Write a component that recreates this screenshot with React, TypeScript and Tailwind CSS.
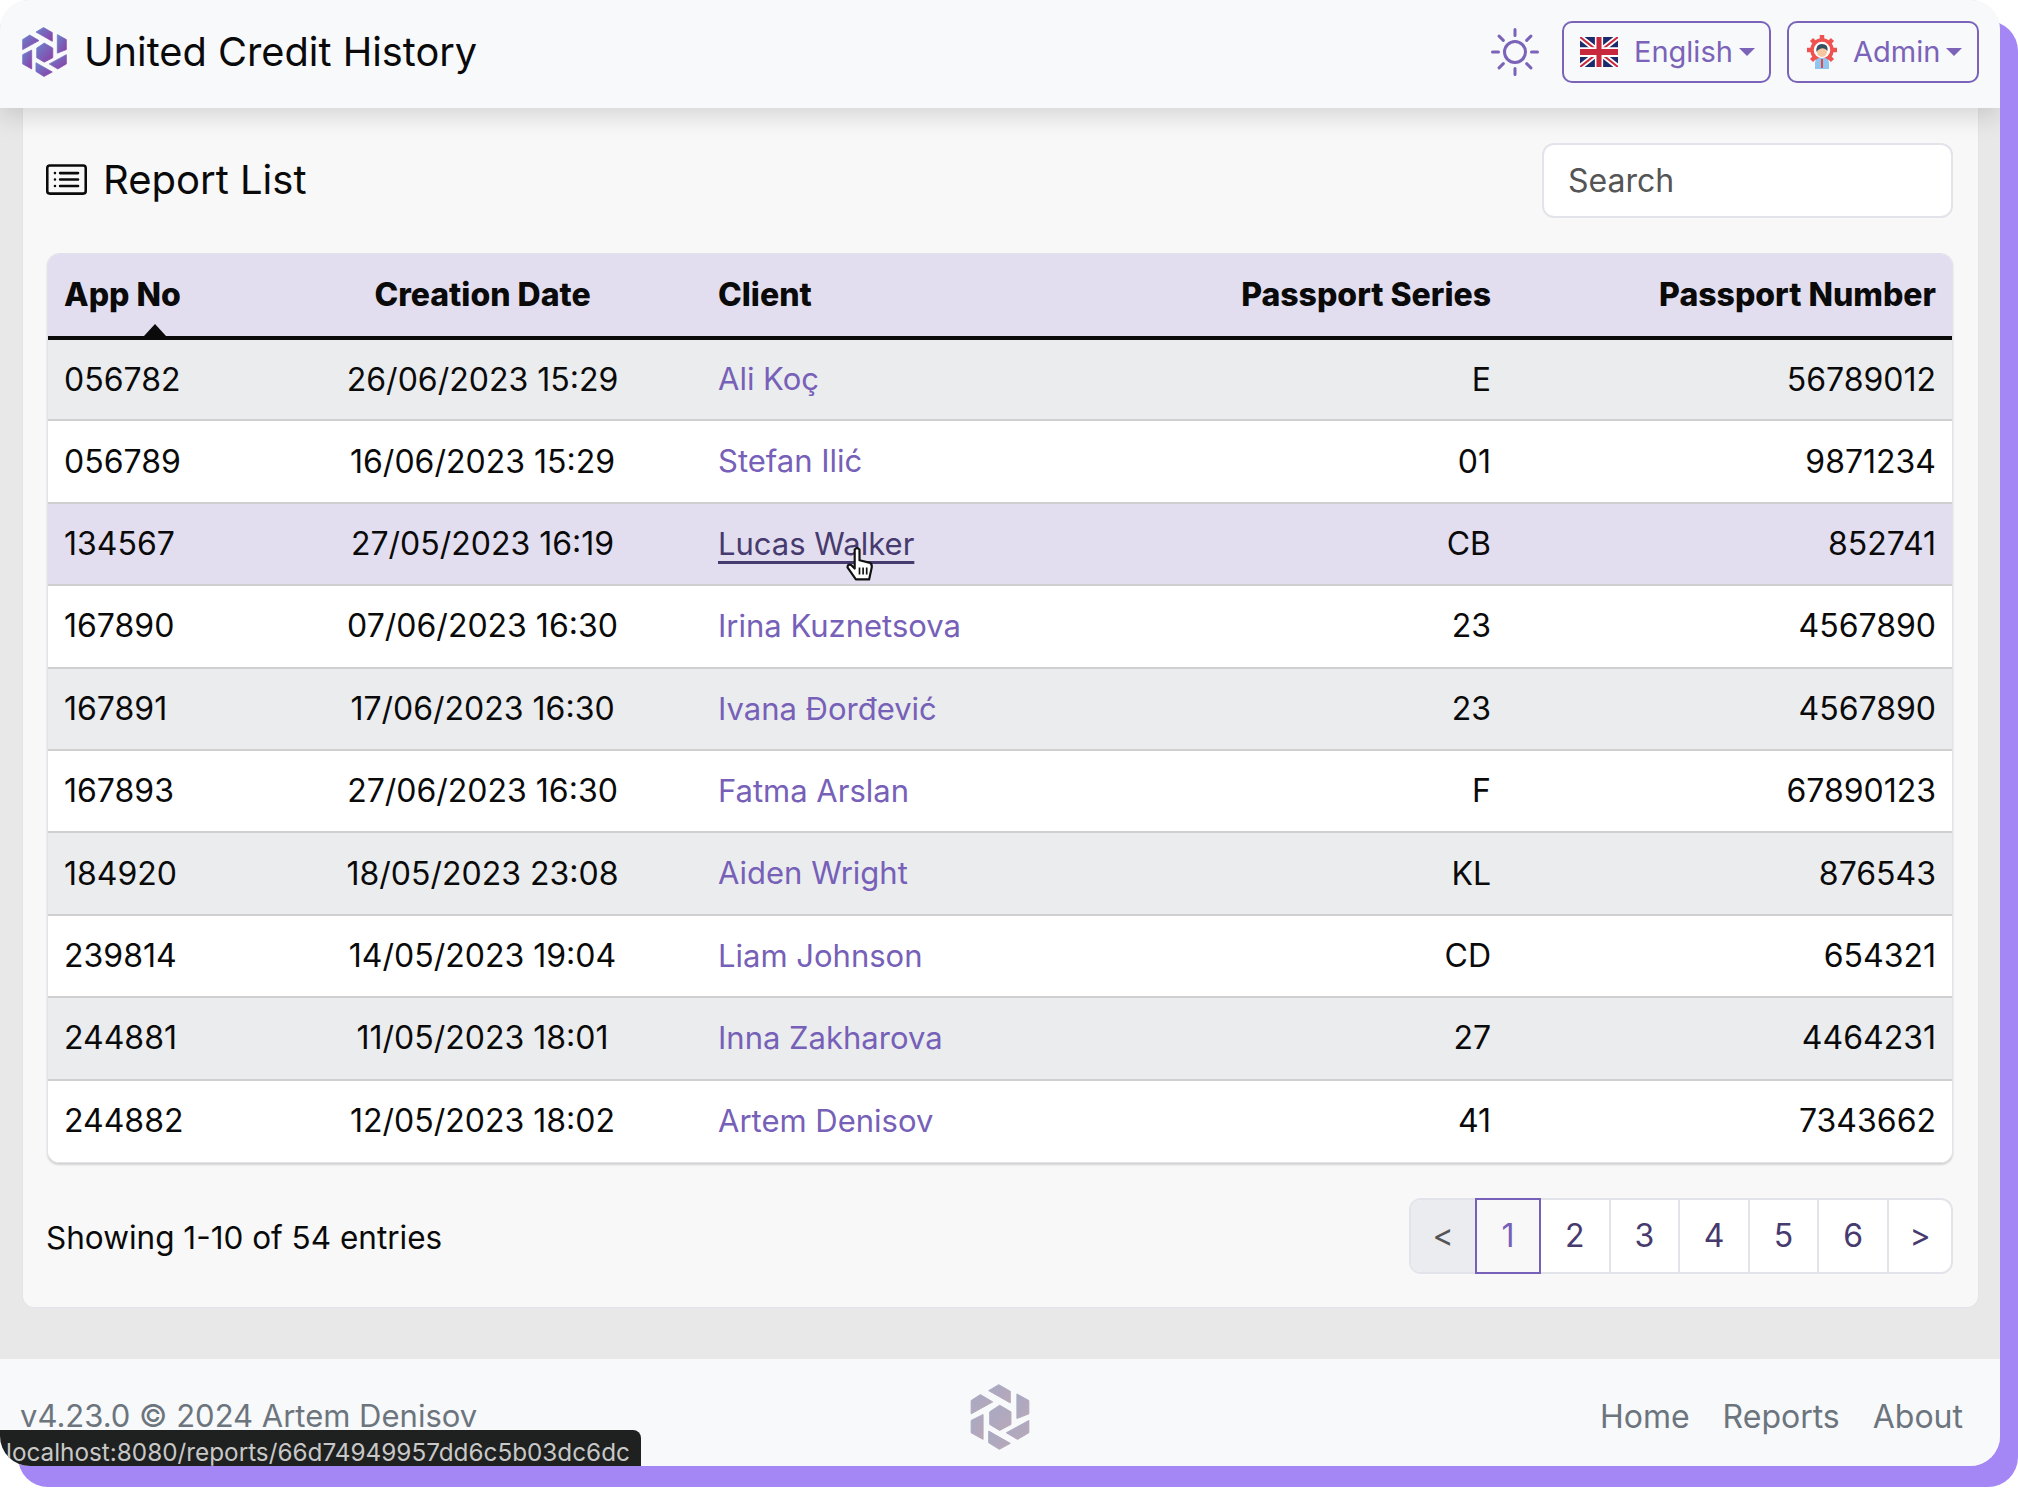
import { BsCardList, BsSun } from "react-icons/bs";

const rows = [
  { no: "056782", date: "26/06/2023 15:29", client: "Ali Koç", series: "E", num: "56789012" },
  { no: "056789", date: "16/06/2023 15:29", client: "Stefan Ilić", series: "01", num: "9871234" },
  { no: "134567", date: "27/05/2023 16:19", client: "Lucas Walker", series: "CB", num: "852741" },
  { no: "167890", date: "07/06/2023 16:30", client: "Irina Kuznetsova", series: "23", num: "4567890" },
  { no: "167891", date: "17/06/2023 16:30", client: "Ivana Đorđević", series: "23", num: "4567890" },
  { no: "167893", date: "27/06/2023 16:30", client: "Fatma Arslan", series: "F", num: "67890123" },
  { no: "184920", date: "18/05/2023 23:08", client: "Aiden Wright", series: "KL", num: "876543" },
  { no: "239814", date: "14/05/2023 19:04", client: "Liam Johnson", series: "CD", num: "654321" },
  { no: "244881", date: "11/05/2023 18:01", client: "Inna Zakharova", series: "27", num: "4464231" },
  { no: "244882", date: "12/05/2023 18:02", client: "Artem Denisov", series: "41", num: "7343662" },
];

function Logo({ id, from, to, className }: { id: string; from: string; to: string; className: string }) {
  return (
    <svg viewBox="120 68 178 199" className={className}>
      <defs>
        <linearGradient id={id} x1="0" y1="0" x2="1" y2="1">
          <stop offset="0" stopColor={from} />
          <stop offset="1" stopColor={to} />
        </linearGradient>
      </defs>
      <g fill={`url(#${id})`} stroke={`url(#${id})`} strokeWidth="3" strokeLinejoin="round">
        <polygon points="208,132 242,152 242,190 208,208 178,190 178,152" />
        <polygon points="175,88 205,70 240,90 240,125" />
        <polygon points="260,98 296,118 296,158 260,172" />
        <polygon points="296,178 296,215 262,235 228,215" />
        <polygon points="175,210 240,247 207,265 175,245" />
        <polygon points="122,178 158,160 158,235 122,215" />
        <polygon points="122,118 150,100 187,122 122,158" />
      </g>
    </svg>
  );
}

function UkFlag() {
  return (
    <svg viewBox="0 0 60 40" className="h-[30px] w-[38px]" preserveAspectRatio="none">
      <rect width="60" height="40" fill="#1b2a6b" />
      <path d="M0 0 L60 40 M60 0 L0 40" stroke="#fff" strokeWidth="8" />
      <path d="M0 0 L60 40 M60 0 L0 40" stroke="#c8283c" strokeWidth="3" />
      <path d="M30 0 V40 M0 20 H60" stroke="#fff" strokeWidth="13" />
      <path d="M30 0 V40 M0 20 H60" stroke="#c8283c" strokeWidth="8" />
    </svg>
  );
}

function AdminIcon() {
  return (
    <svg viewBox="0 0 34 34" className="h-[34px] w-[34px]">
      <circle cx="17" cy="15" r="10" fill="#fff" stroke="#ef5350" strokeWidth="3.5" />
      <path
        d="M17 0 V5 M17 25 V30 M2 15 H7 M27 15 H32 M6.5 4.5 L10 8 M27.5 4.5 L24 8 M6.5 25.5 L10 22 M27.5 25.5 L24 22"
        stroke="#ef5350"
        strokeWidth="4.5"
      />
      <path d="M10 34 V28 Q10 24 14 23 H20 Q24 24 24 28 V34 Z" fill="#90c4f2" />
      <path d="M16 24 H18 V33 H16 Z" fill="#e5483f" />
      <circle cx="17" cy="17" r="5" fill="#f6c6a0" />
      <path d="M11.5 17 Q10.5 9 17 9 Q23.5 9 22.5 16 Q20 12.5 16 13.5 Q13 14 11.5 17 Z" fill="#35505f" />
    </svg>
  );
}

function Caret({ className }: { className: string }) {
  return <span className={`h-0 w-0 border-x-[8px] border-t-[8px] border-x-transparent border-t-[#7a63b8] ${className}`} />;
}

export default function App() {
  return (
    <div className="min-h-[1490px] bg-white [font-family:Inter,sans-serif] text-[#0a0a0a]">
      <div className="relative flex h-[1466px] w-[2000px] flex-col overflow-hidden rounded-[30px] bg-[#e8e8e8] shadow-[18px_21px_0_#a487f5]">
        <header className="relative z-10 flex h-[108px] shrink-0 items-center bg-[#f8f9fb] pb-[5px] pl-[22px] pr-[21px] shadow-[0_8px_24px_rgba(0,0,0,0.14)]">
          <Logo id="navlogo" from="#6b83cc" to="#8b3ea6" className="h-[50px] w-[45px]" />
          <span className="ml-[17px] text-[39.75px] leading-none">United Credit History</span>
          <BsSun className="ml-auto mr-[23px] text-[48px] text-[#7a63b8]" />
          <button className="flex h-[62px] w-[209px] items-center rounded-[10px] border-2 border-[#7a63b8] pl-[16px] text-[29px] text-[#7a63b8]">
            <UkFlag />
            <span className="ml-[16px]">English</span>
            <Caret className="ml-[6px]" />
          </button>
          <button className="ml-[16px] flex h-[62px] w-[192px] items-center rounded-[10px] border-2 border-[#7a63b8] pl-[16px] text-[29px] text-[#7a63b8]">
            <AdminIcon />
            <span className="ml-[14px]">Admin</span>
            <Caret className="ml-[6px]" />
          </button>
        </header>

        <main className="flex-1 pl-[22px] pr-[21px]">
          <section className="h-[1200px] rounded-b-[12px] border-x border-b border-[#e2e4ea] bg-[#f8f8f8] pl-[23px] pr-[25px] pt-[35px]">
            <div className="flex h-[75px] items-center justify-between">
              <div className="flex items-center pb-[2px]">
                <BsCardList className="text-[41px]" />
                <h1 className="ml-[16px] text-[40px] leading-none">Report List</h1>
              </div>
              <div className="flex h-[75px] w-[411px] items-center rounded-[12px] border-2 border-[#e2e4ea] bg-white pl-[24px] text-[32px] text-[#555]">
                Search
              </div>
            </div>

            <div className="ml-px mt-[35px] overflow-hidden rounded-[12px] border border-[#dfe2e8] bg-white shadow-[0_2px_2px_rgba(0,0,0,0.15)]">
              <table className="w-full table-fixed border-collapse text-[32px]">
                <colgroup>
                  <col className="w-[215px]" />
                  <col className="w-[439px]" />
                  <col className="w-[400px]" />
                  <col className="w-[406px]" />
                  <col />
                </colgroup>
                <thead>
                  <tr className="h-[84px] border-b-[4px] border-[#0a0a0a] bg-[#e2deef]">
                    <th className="relative pl-[16px] text-left font-extrabold">
                      App No
                      <span className="absolute bottom-0 left-[96px] h-0 w-0 border-x-[11px] border-b-[12px] border-x-transparent border-b-[#0a0a0a]" />
                    </th>
                    <th className="px-[16px] text-center font-extrabold">Creation Date</th>
                    <th className="px-[16px] text-left font-extrabold">Client</th>
                    <th className="px-[17px] text-right font-extrabold">Passport Series</th>
                    <th className="px-[16px] text-right font-extrabold">Passport Number</th>
                  </tr>
                </thead>
                <tbody>
                  {rows.map((row, i) => {
                    const hovered = row.no === "134567";
                    const bg = hovered ? "bg-[#e2deef]" : i % 2 === 0 ? "bg-[#ebecee]" : "bg-white";
                    return (
                      <tr key={row.no} className={`h-[82.4px] border-b-2 border-[#cfcfcf] last:border-b-0 ${bg}`}>
                        <td className="pl-[16px]">{row.no}</td>
                        <td className="px-[16px] text-center">{row.date}</td>
                        <td className="px-[16px] text-[31px]">
                          {hovered ? (
                            <span className="relative inline-block">
                              <a className="text-[#473a6e] underline decoration-[3px] underline-offset-[6px]">{row.client}</a>
                              <svg viewBox="0 0 24 30" className="absolute left-[127px] top-[26px] h-[36px] w-[29px]">
                                <path
                                  d="M8 2 Q10 0 12 2 V11 L20 13 Q23 14 22 18 L20 27 H9 L2 17 Q2 14 5 15 L8 18 Z"
                                  fill="#fff"
                                  stroke="#111"
                                  strokeWidth="1.8"
                                  strokeLinejoin="round"
                                />
                                <path d="M12 17 V23 M15 17 V23 M18 17 V23" stroke="#111" strokeWidth="1.4" />
                              </svg>
                            </span>
                          ) : (
                            <a className="text-[#7660b8]">{row.client}</a>
                          )}
                        </td>
                        <td className="px-[17px] text-right">{row.series}</td>
                        <td className="px-[16px] text-right">{row.num}</td>
                      </tr>
                    );
                  })}
                </tbody>
              </table>
            </div>

            <div className="mt-[35px] flex h-[76px] items-center justify-between">
              <span className="pt-[4px] text-[31.5px]">Showing 1-10 of 54 entries</span>
              <div className="flex h-[76px] w-[544px] rounded-[12px] border-2 border-[#e2e4ea] bg-white text-[32px] text-[#473a6e]">
                <span className="flex w-[64px] items-center justify-center rounded-l-[10px] bg-[#ebecef] text-[#555]">&lt;</span>
                <span className="-my-[2px] flex w-[66px] items-center justify-center border-2 border-[#7660b8] bg-[#f8f8f8] text-[#7660b8]">1</span>
                {["2", "3", "4", "5", "6"].map((n) => (
                  <span key={n} className="flex w-[69.6px] items-center justify-center border-r-2 border-[#e2e4ea]">
                    {n}
                  </span>
                ))}
                <span className="flex flex-1 items-center justify-center">&gt;</span>
              </div>
            </div>
          </section>
        </main>

        <footer className="grid h-[107px] shrink-0 grid-cols-[950px_60px_1fr] items-center bg-[#f8f9fb] pl-[20px] pr-[37px] pt-[8px] text-[31px] text-[#6c757d]">
          <span>v4.23.0 © 2024 Artem Denisov</span>
          <Logo id="footlogo" from="#a8a9c4" to="#b8a8b8" className="h-[66px] w-[60px]" />
          <nav className="flex justify-end gap-[33px] text-[32px]">
            <span>Home</span>
            <span>Reports</span>
            <span>About</span>
          </nav>
        </footer>

        <div className="absolute bottom-0 left-0 z-20 flex h-[36px] w-[641px] items-center overflow-hidden whitespace-nowrap rounded-tr-[8px] bg-[#1f2120] pl-[6px] pt-[8px] text-[24.3px] leading-none text-[#c8c8c8]">
          localhost:8080/reports/66d74949957dd6c5b03dc6dc
        </div>
      </div>
    </div>
  );
}
